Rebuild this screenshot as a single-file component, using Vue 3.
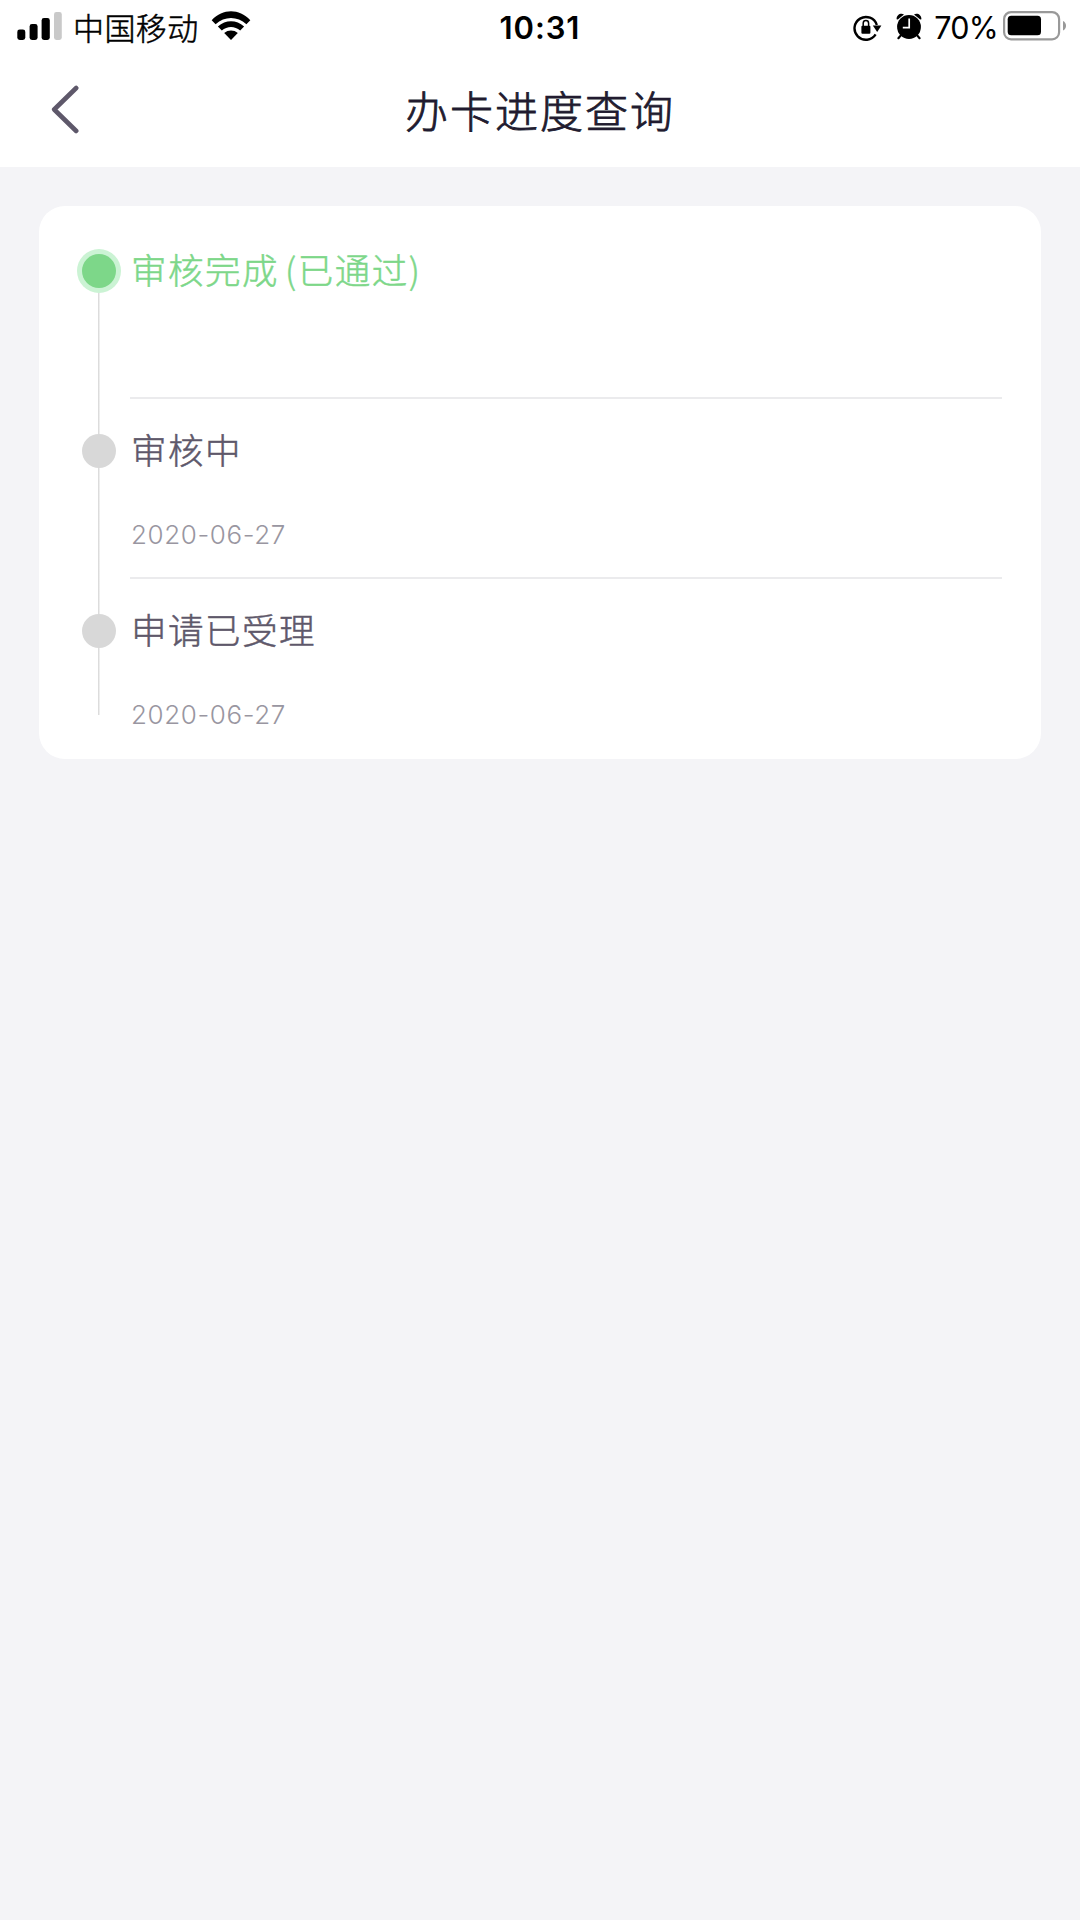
<script setup>
const steps = [
  { title: '审核完成', result: '(已通过)', date: '', done: true },
  { title: '审核中', result: '', date: '2020-06-27', done: false },
  { title: '申请已受理', result: '', date: '2020-06-27', done: false },
]
</script>

<template>
  <div class="screen">
    <header class="top">
      <div class="status">
        <div class="side left">
          <svg class="signal" width="46" height="30" viewBox="0 0 46 30">
            <rect x="0.3" y="17.6" width="8" height="10.4" rx="2.4" />
            <rect x="12.6" y="12" width="8" height="16" rx="2.4" />
            <rect x="24.6" y="6" width="8.2" height="22" rx="2.4" />
            <rect x="37" y="0" width="7.8" height="28" rx="2.4" fill="#c9c9c9" />
          </svg>
          <span class="carrier">中国移动</span>
          <svg class="wifi" width="40" height="30" viewBox="0 0 40 30">
            <path d="M0.7 9.2C12 -2.7 28 -2.7 39.3 9.2L35.4 13.3C26.4 4.9 13.6 4.9 4.6 13.3Z" />
            <path d="M6.9 15.6C14.6 8.4 25.4 8.4 33.1 15.6L29.2 19.6C23.8 14.7 16.2 14.7 10.8 19.6Z" />
            <path d="M13.2 22C17.2 18.7 22.8 18.7 26.8 22L20 29Z" />
          </svg>
        </div>
        <span class="clock">10:31</span>
        <div class="side right">
          <svg class="lock" width="30" height="28" viewBox="0 0 30 28">
            <path d="M22.6 20.4A11.4 11.4 0 1 1 23.8 11" fill="none" stroke="#000" stroke-width="2.4" />
            <path d="M19.8 11.4H28.4L24.2 18Z" />
            <rect x="8.4" y="11.8" width="9" height="8" rx="1" />
            <path d="M10.2 12V9.2a2.7 2.7 0 0 1 5.4 0V12" fill="none" stroke="#000" stroke-width="1.5" />
          </svg>
          <svg class="alarm" width="26" height="27" viewBox="0 0 26 27">
            <circle cx="13" cy="14" r="11.9" />
            <path d="M0.6 6.2C0.4 2 4.4 -0.4 8 1.4L1.8 6.6ZM25.4 6.2C25.6 2 21.6 -0.4 18 1.4L24.2 6.6Z" />
            <path d="M4.6 22.6L2.4 25.2M21.4 22.6L23.6 25.2" stroke="#000" stroke-width="2.2" stroke-linecap="round" />
            <path d="M13.2 5.6V14.6H6.8" fill="none" stroke="#fff" stroke-width="1.7" />
          </svg>
          <span class="percent">70%</span>
          <svg class="battery" width="64" height="30" viewBox="0 0 64 30">
            <rect x="1.1" y="1.1" width="55" height="27.2" rx="7" fill="none" stroke="#999" stroke-width="2.2" />
            <rect x="4.7" y="4.8" width="33.3" height="19.5" rx="3.5" />
            <path d="M60 10C64 11.5 64 18 60 19.5Z" fill="#999" />
          </svg>
        </div>
      </div>
      <nav class="nav">
        <svg class="back" width="30" height="50" viewBox="0 0 30 50">
          <path d="M26.2 4L4.2 25.5L26.2 47" fill="none" stroke="#5e586a" stroke-width="4.6" stroke-linecap="round" stroke-linejoin="round" />
        </svg>
        <h1>办卡进度查询</h1>
      </nav>
    </header>

    <main class="card">
      <section v-for="(step, i) in steps" :key="i" class="step" :class="{ done: step.done }">
        <div class="rail"><i class="dot"></i></div>
        <div class="body">
          <div class="title">{{ step.title }}<span v-if="step.result" class="result">{{ step.result }}</span></div>
          <div class="date">{{ step.date }}</div>
        </div>
      </section>
    </main>
  </div>
</template>

<style>
body {
  background: #f4f4f7;
}
</style>

<style scoped>
.screen {
  height: 1920px;
  background: #f4f4f7;
  font-family: Inter, "Noto Sans CJK SC", sans-serif;
  overflow: hidden;
}
.top {
  height: 166.5px;
  background: #fff;
}
.status {
  display: flex;
  height: 54px;
  color: #000;
}
.side {
  flex: 1;
  display: flex;
  align-items: flex-start;
}
.signal {
  margin: 12px 0 0 17px;
}
.carrier {
  margin: 4px 0 0 10px;
  width: 128px;
  white-space: nowrap;
  font: 300 31px/46px "Noto Sans CJK SC", sans-serif;
  letter-spacing: 0.4px;
  -webkit-text-stroke: 0.5px #000;
}
.wifi {
  margin: 11px 0 0 10px;
}
.clock {
  margin-top: 5px;
  font-size: 31px;
  line-height: 46px;
  font-weight: 600;
  letter-spacing: 0.9px;
}
.right {
  justify-content: flex-end;
}
.lock {
  margin: 14px 13px 0 0;
}
.alarm {
  margin: 13px 12px 0 0;
}
.percent {
  margin: 5px 5px 0 0;
  font-size: 30.5px;
  line-height: 46px;
  letter-spacing: -0.7px;
}
.battery {
  margin: 11px 13px 0 0;
}
.nav {
  display: flex;
  height: 112px;
}
.back {
  margin: 30px 0 0 50px;
}
h1 {
  flex: 1;
  margin: 23px 80px 0 0;
  text-align: center;
  color: #211b2f;
  font: 300 43px/64px "Noto Sans CJK SC", sans-serif;
  letter-spacing: 2px;
  -webkit-text-stroke: 0.8px #211b2f;
}
.card {
  margin: 39.5px 39px 0;
  height: 553px;
  box-sizing: border-box;
  padding: 13px 39px 0 43px;
  border-radius: 26px;
  background: #fff;
}
.step {
  display: flex;
  height: 180px;
}
.rail {
  width: 34px;
  margin-right: 14px;
  display: flex;
  justify-content: center;
  align-items: flex-start;
  background: linear-gradient(#dcdcdc, #dcdcdc) 16px 0 / 1.5px 100% no-repeat;
}
.step.done .rail {
  background-position: 16px 52px;
}
.step:last-child .rail {
  height: 136px;
}
.dot {
  width: 34px;
  height: 34px;
  margin-top: 35px;
  border-radius: 50%;
  background: #d8d8d8;
}
.done .dot {
  background: #7dd789;
  box-shadow: 0 0 0 5px #cbf3d4;
}
.body {
  flex: 1;
  box-sizing: border-box;
  border-bottom: 2px solid #ebebed;
}
.step:last-child .body {
  border-bottom: 0;
}
.title {
  margin: 23px 0 0 1px;
  height: 54px;
  color: #5e586a;
  font: 300 35.5px/54px "Noto Sans CJK SC", sans-serif;
  letter-spacing: 1.5px;
  -webkit-text-stroke: 0.5px currentColor;
}
.done .title {
  color: #7dd789;
}
.result {
  margin-left: 6px;
}
.date {
  margin: 39px 0 0 1px;
  color: #9996a1;
  font-size: 26px;
  font-weight: 300;
  line-height: 40px;
  letter-spacing: 0.6px;
}
</style>
